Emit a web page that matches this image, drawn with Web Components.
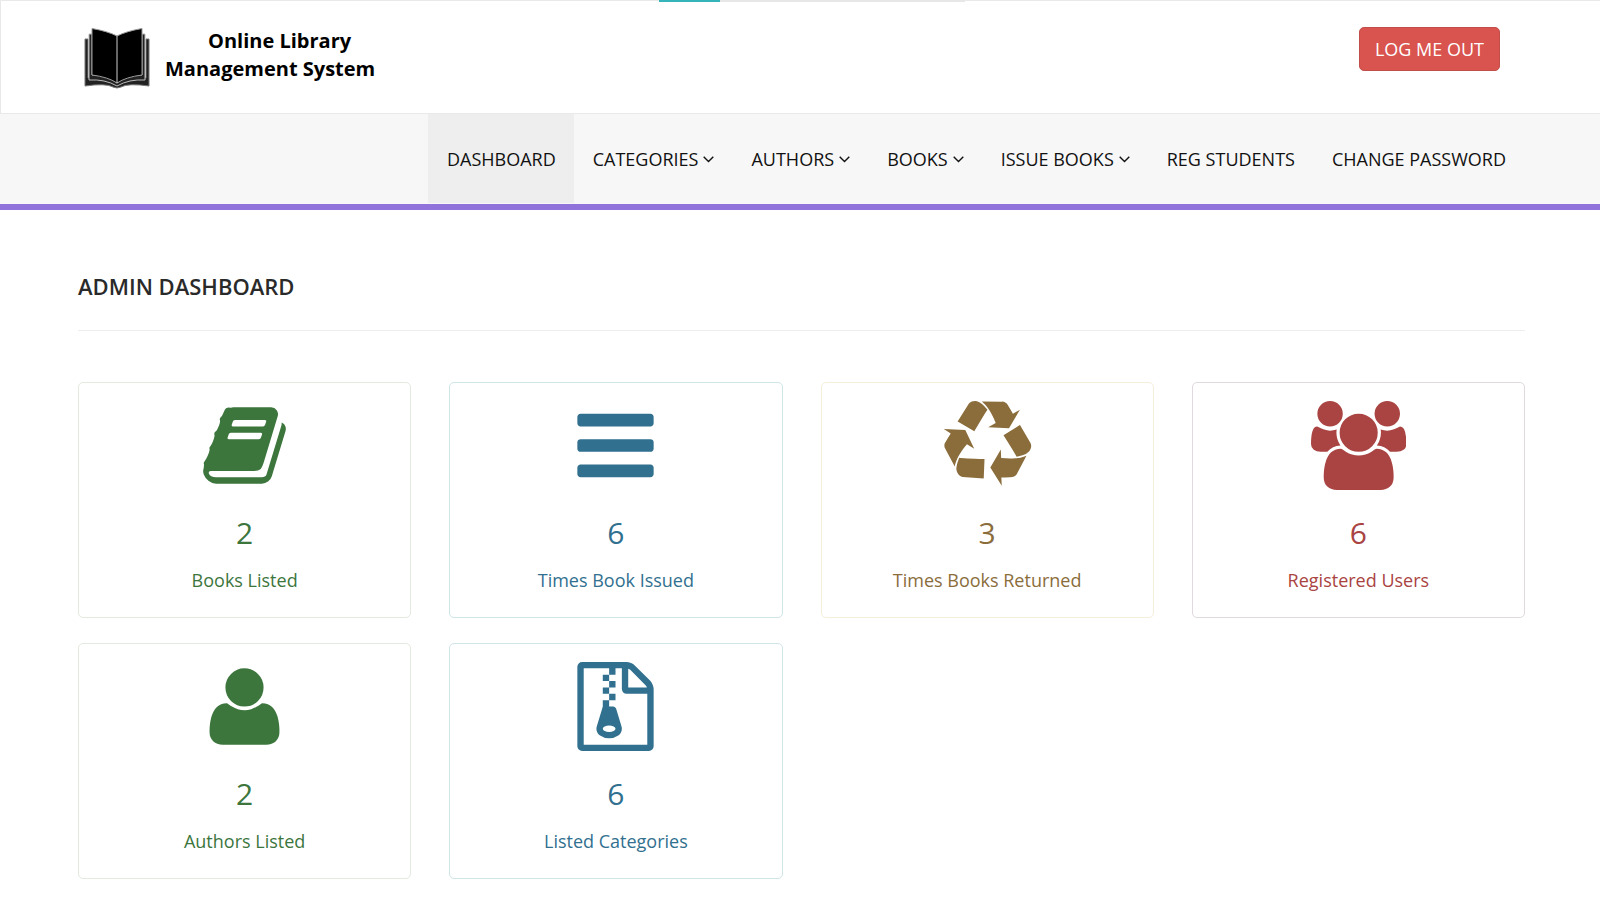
<!DOCTYPE html>
<html lang="en">
<head>
<meta charset="utf-8">
<meta name="viewport" content="width=device-width, initial-scale=1">
<title>Online Library Management System</title>
<style>
  body { margin: 0; background: #fff; font-family: "Open Sans", "Noto Sans", sans-serif; font-size: 18px; line-height: 26px; color: #000; }
</style>
</head>
<body>
<library-app></library-app>

<script>
const define = (name, html, setup) => {
  const template = document.createElement('template');
  template.innerHTML = html;
  customElements.define(name, class extends HTMLElement {
    constructor() {
      super();
      this.attachShadow({ mode: 'open' }).append(template.content.cloneNode(true));
    }
    connectedCallback() { if (setup) setup(this, this.shadowRoot); }
  });
};

/* Icon outlines: [view box width, path data]; every icon is 1792 units high. */
const ICONS = {
  book: [1792, 'M1703 478q40 57 18 129l-275 906q-19 64-76.500 107.500t-122.500 43.500h-923q-77 0-148.500-53.500t-99.500-131.500q-24-67-2-127 0-4 3-27t4-37q1-8-3-21.500t-3-19.500q2-11 8-21t16.500-23.500 16.500-23.500q23-38 45-91.500t30-91.500q3-10 .5-30t-.5-28q3-11 17-28t17-23q21-36 42-92t25-90q1-9-2.500-32t.5-28q4-13 22-30.500t22-22.500q19-26 42.500-84.500t27.500-96.500q1-8-3-25.500t-2-26.500q2-8 9-18t18-23 17-21q8-12 16.500-30.500t15-35 16-36 19.500-32 26.500-23.500 36-11.500 47.500 5.500l-1 3q38-9 51-9h761q74 0 114 56t18 130l-274 906q-36 119-71.500 153.500t-128.500 34.500h-869q-27 0-38 15-11 16-1 43 24 70 144 70h923q29 0 56-15.500t35-41.500l300-987q7-22 5-57 38 15 59 43zm-1064 2q-4 13 2 22.500t20 9.500h608q13 0 25.500-9.500t16.500-22.500l21-64q4-13-2-22.500t-20-9.500h-608q-13 0-25.500 9.500t-16.500 22.500zm-83 256q-4 13 2 22.500t20 9.500h608q13 0 25.500-9.500t16.500-22.500l21-64q4-13-2-22.500t-20-9.500h-608q-13 0-25.500 9.500t-16.500 22.500z'],
  bars: [1792, 'M1664 1344v128q0 26-19 45t-45 19h-1408q-26 0-45-19t-19-45v-128q0-26 19-45t45-19h1408q26 0 45 19t19 45zm0-512v128q0 26-19 45t-45 19h-1408q-26 0-45-19t-19-45v-128q0-26 19-45t45-19h1408q26 0 45 19t19 45zm0-512v128q0 26-19 45t-45 19h-1408q-26 0-45-19t-19-45v-128q0-26 19-45t45-19h1408q26 0 45 19t19 45z'],
  recycle: [1792, 'M836 1169l-15 368-2 22-420-29q-36-3-67-31.500t-47-65.500q-11-27-14.500-55t4-65 12-55 21.500-64 19-53q78 12 509 28zm-387-586l180 379-147-92q-63 72-111.500 144.500t-72.500 125-39.500 94.500-18.500 63l-4 21-190-357q-17-26-18-56t6-47l8-18q35-63 114-188l-140-86zm1231 517l-188 359q-12 29-36.500 46.500t-43.500 20.500l-18 4q-71 7-219 12l8 164-230-367 211-362 7 173q170 16 283 5t170-33zm-785-924q-47 63-265 435l-317-187-19-12 225-356q20-31 60-45t80-10q24 2 48.500 12t42 21 41.500 33 36 34.500 36 39.500 32 35zm655 307l212 363q18 37 12.500 76t-27.500 74q-13 20-33 37t-38 28-48.500 22-47 16-51.500 14-46 12q-34-72-265-436l313-195zm-143-226l142-83-220 373-419-20 151-86q-34-89-75-166t-75.500-123.500-64.500-80-47-46.500l-17-13 405 1q31-3 58 10.500t39 28.500l11 15q39 61 112 190z'],
  users: [1920, 'M593 896q-162 5-265 128h-134q-82 0-138-40.500t-56-118.500q0-353 124-353 6 0 43.500 21t97.500 42.500 119 21.500q67 0 133-23-5 37-5 66 0 139 81 256zm1071 637q0 120-73 189.500t-194 69.500h-874q-121 0-194-69.500t-73-189.500q0-53 3.500-103.500t14-109 26.500-108.500 43-97.500 62-81 85.500-53.500 111.500-20q10 0 43 21.500t73 48 107 48 135 21.500 135-21.500 107-48 73-48 43-21.500q61 0 111.500 20t85.500 53.500 62 81 43 97.500 26.500 108.500 14 109 3.500 103.500zm-1024-1277q0 106-75 181t-181 75-181-75-75-181 75-181 181-75 181 75 75 181zm704 384q0 159-112.500 271.500t-271.500 112.500-271.500-112.500-112.500-271.500 112.500-271.500 271.500-112.500 271.500 112.500 112.500 271.500zm576 225q0 78-56 118.500t-138 40.500h-134q-103-123-265-128 81-117 81-256 0-29-5-66 66 23 133 23 59 0 119-21.500t97.500-42.500 43.500-21q124 0 124 353zm-128-609q0 106-75 181t-181 75-181-75-75-181 75-181 181-75 181 75 75 181z'],
  user: [1792, 'M1600 1405q0 120-73 189.500t-194 69.500h-874q-121 0-194-69.500t-73-189.500q0-53 3.500-103.500t14-109 26.500-108.500 43-97.500 62-81 85.500-53.500 111.500-20q9 0 42 21.500t74.500 48 108 48 133.500 21.500 133.500-21.500 108-48 74.500-48 42-21.500q61 0 111.500 20t85.500 53.500 62 81 43 97.500 26.500 108.500 14 109 3.500 103.500zm-320-893q0 159-112.500 271.500t-271.500 112.500-271.500-112.500-112.500-271.500 112.500-271.500 271.500-112.500 271.500 112.500 112.500 271.500z'],
  archive: [1792, 'M768 384v-128h-128v128h128zm128 128v-128h-128v128h128zm-128 128v-128h-128v128h128zm128 128v-128h-128v128h128zm700-388q28 28 48 76t20 88v1152q0 40-28 68t-68 28h-1344q-40 0-68-28t-28-68v-1600q0-40 28-68t68-28h896q40 0 88 20t76 48zm-444-244v376h376q-10-29-22-41l-313-313q-12-12-41-22zm384 1528v-1024h-416q-40 0-68-28t-28-68v-416h-128v128h-128v-128h-512v1536h1280zm-627-721l107 349q8 27 8 52 0 83-72.500 137.500t-183.500 54.500-183.500-54.500-72.500-137.500q0-25 8-52 21-63 120-396v-128h128v128h79q22 0 39 13t23 34zm-141 465q53 0 90.500-19t37.500-45-37.500-45-90.500-19-90.500 19-37.500 45 37.500 45 90.500 19z']
};

define('load-bar', `
  <style>
    :host { position: absolute; top: 0; left: 41.2%; width: 19.1%; height: 2px; background: #e7e7e7; display: block; }
    div { width: 20%; height: 2px; background: #35b5b9; }
  </style>
  <div></div>`);

define('site-logo', `
  <style>
    :host { display: block; }
    a { display: flex; gap: 14px; color: #000; text-decoration: none; font-size: 20px; line-height: 28px; font-weight: 700; }
    svg { display: block; width: 68px; height: 62px; }
    span { display: block; }
    .first { padding-left: 43px; }
  </style>
  <a href="#">
    <svg viewBox="0 0 68 62" aria-hidden="true">
      <path d="M2 12H5V51Q22 50 34 57 46 50 63 51V12H66V59Q45 56 38 60 34 62 30 60 23 56 2 59z" fill="#222" stroke="#777"/>
      <path d="M6 7H9V48Q24 48 34 56 44 48 59 48V7H62V53Q46 52 34 59 22 52 6 53z" fill="#222" stroke="#bbb"/>
      <path d="M9 1.500Q24 4 34 9 44 4 59 1.500V48Q43 50 34 56 25 50 9 48z" stroke="#999"/>
      <path d="M34 9v47" stroke="#ccc"/>
    </svg>
    <div><span class="first">Online Library</span><span>Management System</span></div>
  </a>`);

define('site-header', `
  <style>
    :host { display: block; }
    header { display: flex; justify-content: space-between; align-items: flex-start; box-sizing: border-box; min-height: 114px; padding: 26px 100px 24px 82px; border: 1px solid #e9e9e9; border-right: 0; }
    button { font: inherit; color: #fff; background: #d9534f; border: 1px solid #c04f4b; border-radius: 5px; padding: 8px 15px; }
  </style>
  <header><site-logo></site-logo><button type="button">LOG ME OUT</button></header>`);

define('nav-item', `
  <style>
    :host { display: block; }
    a { display: flex; align-items: center; gap: 5px; padding: 32px 18px 31px 19px; color: #111; text-decoration: none; white-space: nowrap; }
    :host([active]) a { background: #eee; }
    svg { display: none; width: 11px; height: 7px; fill: none; stroke: #111; stroke-width: 1.4; }
    :host([menu]) svg { display: block; }
  </style>
  <a href="#"><slot></slot><svg viewBox="0 0 11 7" aria-hidden="true"><path d="M.7.8l4.800 4.800L10.300.8"/></svg></a>`);

define('main-nav', `
  <style>
    :host { display: block; background: #f7f7f7; border-bottom: 6px solid #9072da; }
    nav { display: flex; justify-content: flex-end; padding: 0 76px 1px 0; }
  </style>
  <nav aria-label="Main"><slot></slot></nav>`);

define('stat-card', `
  <style>
    :host { display: block; --ink: #3c763d; --edge: #e3eadf; }
    :host([tone="info"]) { --ink: #31708f; --edge: #cfe6e8; }
    :host([tone="warning"]) { --ink: #8a6d3b; --edge: #f5efdc; }
    :host([tone="danger"]) { --ink: #a94442; --edge: #dedade; }
    article { display: flex; flex-direction: column; align-items: center; box-sizing: border-box; padding: 18px 19px 24px; border: 1px solid var(--edge); border-radius: 5px; color: var(--ink); text-align: center; }
    svg { display: block; height: 89px; fill: currentColor; }
    h3 { margin: 21px 0 12px; font-size: 30px; line-height: 44px; font-weight: 400; }
    p { margin: 0; }
  </style>
  <article><svg aria-hidden="true"><path/></svg><h3></h3><p><slot></slot></p></article>`,
  (host, root) => {
    const [width, path] = ICONS[host.getAttribute('icon')];
    root.querySelector('svg').setAttribute('viewBox', `0 0 ${width} 1792`);
    root.querySelector('path').setAttribute('d', path);
    root.querySelector('h3').textContent = host.getAttribute('count');
  });

define('dashboard-page', `
  <style>
    :host { display: block; }
    main { padding: 60px 75px 20px 78px; }
    h1 { margin: 0; padding-bottom: 27px; border-bottom: 1px solid #eee; font-size: 22px; line-height: 33px; font-weight: 600; color: #2a2a2a; }
    section { display: grid; grid-template-columns: repeat(4, 1fr); gap: 25px 38px; margin-top: 51px; }
  </style>
  <main><h1>ADMIN DASHBOARD</h1><section><slot></slot></section></main>`);

define('library-app', `
  <style>:host { display: block; position: relative; }</style>
  <site-header></site-header>
  <load-bar></load-bar>
  <main-nav>
    <nav-item active>DASHBOARD</nav-item>
    <nav-item menu>CATEGORIES</nav-item>
    <nav-item menu>AUTHORS</nav-item>
    <nav-item menu>BOOKS</nav-item>
    <nav-item menu>ISSUE BOOKS</nav-item>
    <nav-item>REG STUDENTS</nav-item>
    <nav-item>CHANGE PASSWORD</nav-item>
  </main-nav>
  <dashboard-page>
    <stat-card icon="book" count="2">Books Listed</stat-card>
    <stat-card icon="bars" count="6" tone="info">Times Book Issued</stat-card>
    <stat-card icon="recycle" count="3" tone="warning">Times Books Returned</stat-card>
    <stat-card icon="users" count="6" tone="danger">Registered Users</stat-card>
    <stat-card icon="user" count="2">Authors Listed</stat-card>
    <stat-card icon="archive" count="6" tone="info">Listed Categories</stat-card>
  </dashboard-page>`);
</script>
</body>
</html>
